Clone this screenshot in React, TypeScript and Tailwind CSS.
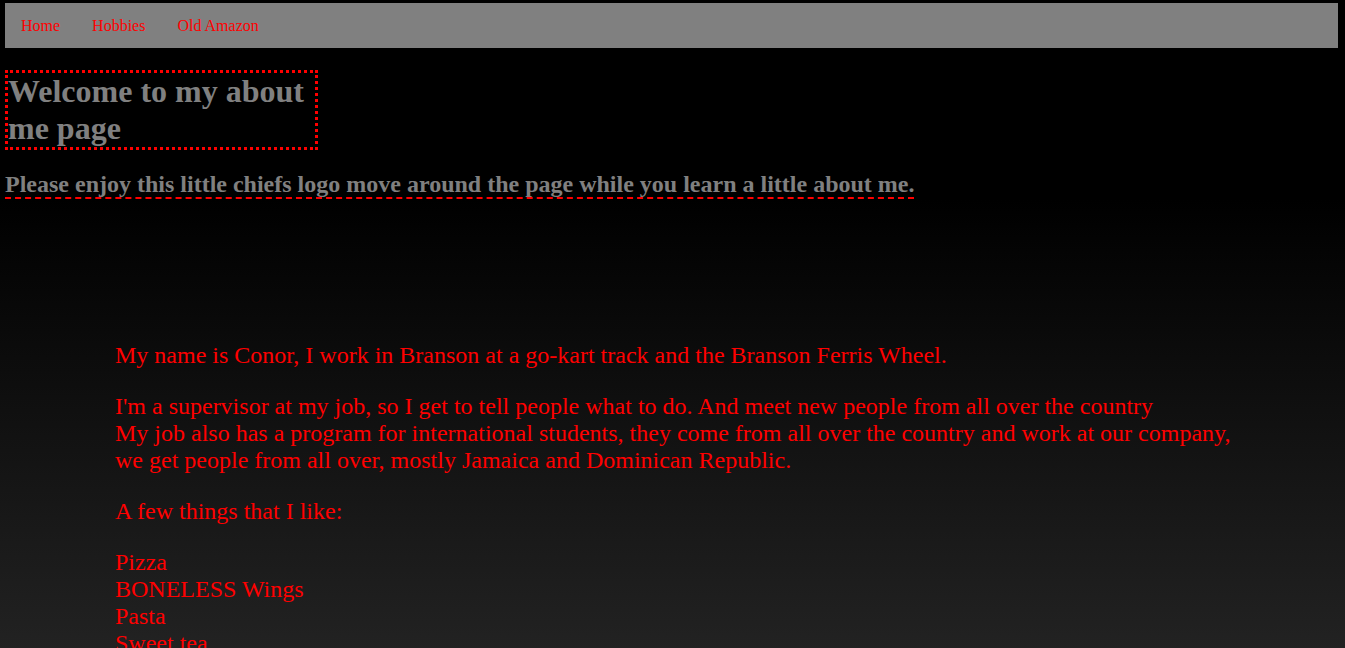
export default function App() {
  const likes = ["Pizza", "BONELESS Wings", "Pasta", "Sweet tea"];

  return (
    <div className="h-[648px] overflow-hidden bg-black font-['Liberation_Serif',serif]">
      {/* Nav */}
      <nav className="ml-[5px] mt-[3px] w-[1333px] h-[45px] bg-[#808080] flex items-center pt-[1px]">
        <a className="px-4 text-[16px] text-[#ff0000]">Home</a>
        <a className="px-4 text-[16px] text-[#ff0000]">Hobbies</a>
        <a className="px-4 text-[16px] text-[#ff0000]">Old Amazon</a>
      </nav>

      {/* Heading */}
      <div className="ml-[5px] mt-[22px] w-[313px] border-[3px] border-dotted border-[#ff0000]">
        <h1 className="text-[32px] leading-[37px] font-bold text-[#808080]">
          Welcome to my about me page
        </h1>
      </div>

      <div className="ml-[5px] mt-[21px]">
        <h3 className="inline-block text-[24px] leading-[26px] font-bold text-[#808080] border-b-2 border-dashed border-[#ff0000]">
          Please enjoy this little chiefs logo move around the page while you learn a little about me.
        </h3>
      </div>

      {/* About */}
      <div className="bg-[linear-gradient(to_bottom,#000000,#222222)] h-[450px] pt-[143px] pl-[115px] text-[24px] leading-[27px] text-[#ff0000]">
        <p>My name is Conor, I work in Branson at a go-kart track and the Branson Ferris Wheel.</p>
        <p className="mt-6">
          I'm a supervisor at my job, so I get to tell people what to do. And meet new people from all over the country
          <br />
          My job also has a program for international students, they come from all over the country and work at our company,
          <br />
          we get people from all over, mostly Jamaica and Dominican Republic.
        </p>
        <p className="mt-6">A few things that I like:</p>
        <ul className="mt-6">
          {likes.map((item) => (
            <li key={item}>{item}</li>
          ))}
        </ul>
      </div>
    </div>
  );
}
